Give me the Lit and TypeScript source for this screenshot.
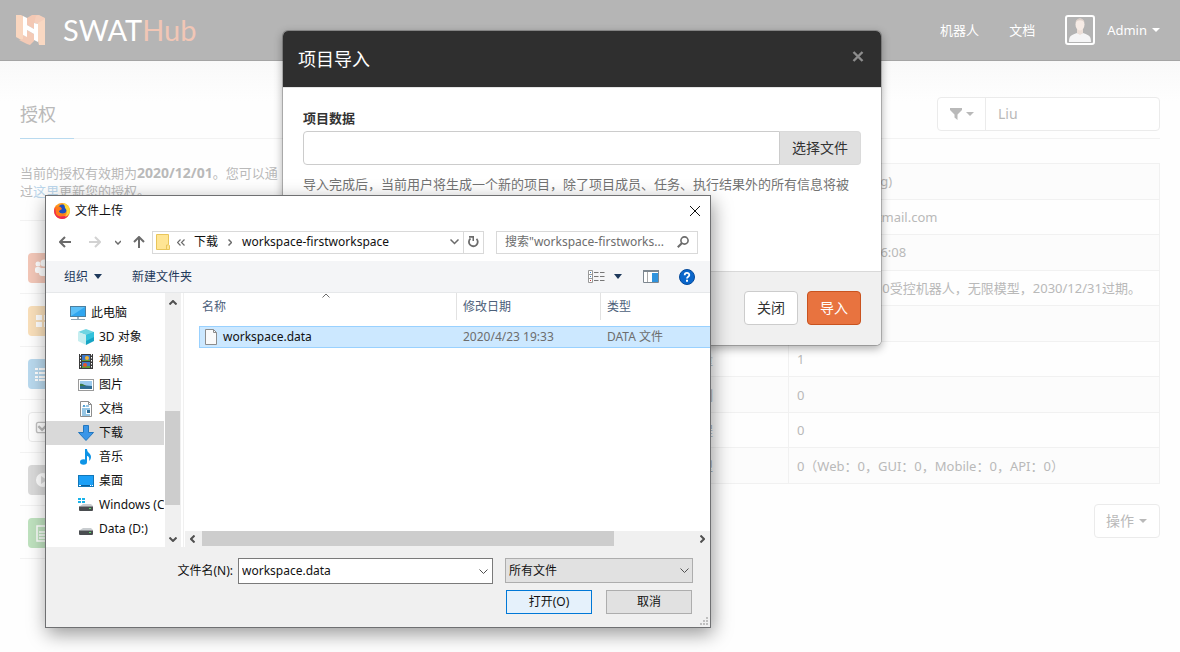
import { LitElement, html, css, svg } from "lit";
import { customElement, state } from "lit/decorators.js";
import { classMap } from "lit/directives/class-map.js";

const base = css`
  *, *::before, *::after { box-sizing: border-box; }
  button, input, select { font: inherit; color: inherit; margin: 0; padding: 0; border-radius: 0; outline: none; }
  button { cursor: pointer; background: none; border: 0; }
  h1, h2, p, ul { margin: 0; padding: 0; font-weight: 400; list-style: none; }
  a { text-decoration: none; color: inherit; }
  svg { display: block; flex: none; }
`;

const caret = html`<svg width="8" height="4" viewBox="0 0 8 4"><path d="M0 0h8L4 4z" fill="currentColor"/></svg>`;

/* ---------- navigation bar ---------- */
@customElement("top-bar")
class TopBar extends LitElement {
  static styles = [base, css`
    :host { display: block; }
    .bar { display: flex; align-items: center; height: 61px; padding: 0 20px 0 16px; background: #b5b5b5; border-bottom: 1px solid #a4a4a4; color: #fff; }
    .brand { display: flex; align-items: center; gap: 18px; font: 29px/36px Lato, sans-serif; }
    .hub { color: #f1c6b5; }
    .links { display: flex; align-items: center; gap: 30px; margin-left: auto; line-height: 20px; }
    .user { display: flex; align-items: center; gap: 5px; }
    .avatar { margin-right: 7px; }
  `];
  render() {
    return html`<header class="bar">
      <a class="brand" href="#">
        <svg width="29" height="30" viewBox="0 0 29 30">
          <path d="M0 0h5l2 1v25l-7-4z" fill="#f9d6bf"/>
          <path d="M7 20l4 1v-6l7 4v7l-4 4-3-1-8-4 4-1z" fill="#f3cab6"/>
          <path d="M11 3l5-3h7l-5 8v6l-7-4z" fill="#f3c8b4"/>
          <path d="M23 0l6 3v3l-7 3-4-1 2-7z" fill="#f5cfbc"/>
          <path d="M22 8l7-4v26h-6l-1-4z" fill="#f9d8c2"/>
          <path d="M7 1l4 2v7l7 4V8l4 1v18l-4-2v-6l-7-4v7l-4-2z" fill="#fff"/>
        </svg>
        <span>SWAT<span class="hub">Hub</span></span>
      </a>
      <nav class="links">
        <a href="#">机器人</a>
        <a href="#">文档</a>
        <a class="user" href="#">
          <svg class="avatar" width="30" height="30" viewBox="0 0 30 30">
            <rect x="1" y="1" width="28" height="28" rx="2" fill="#b3b3b3" stroke="#fff" stroke-width="2"/>
            <path d="M4 27c0-6 2-7 8-9l3 1 3-1c6 2 8 3 8 9z" fill="#f5f5f6"/>
            <path d="M12 13h6v5l-3 2-3-2z" fill="#ecdfd8"/>
            <ellipse cx="15" cy="9.500" rx="4.500" ry="6" fill="#f6ebe5"/>
            <path d="M10.500 8c0-6 9-6 9 0l-1-2c-2-1-5-1-7 0z" fill="#dccfc8"/>
          </svg>
          <span>Admin</span>${caret}
        </a>
      </nav>
    </header>`;
  }
}

/* ---------- licence page ---------- */
const apps = [
  { tone: "red", icon: svg`<g fill="#fff"><circle cx="10" cy="11" r="2.500"/><circle cx="16" cy="10" r="3.500"/><circle cx="22" cy="11" r="2.500"/><rect x="7" y="14" width="6" height="6" rx="2"/><rect x="19" y="14" width="6" height="6" rx="2"/><rect x="11" y="15" width="10" height="8" rx="3"/></g>` },
  { tone: "orange", icon: svg`<path d="M8 9h6v5H8zM16 9h6v5h-6zM8 16h6v5H8zM16 16h6v5h-6z" fill="#fff"/>` },
  { tone: "blue", icon: svg`<path d="M7 9h3v2H7zM7 13h3v2H7zM7 17h3v2H7zM11 9h12v2H11zM11 13h12v2H11zM11 17h12v2H11zM7 20h3v2H7zM11 20h12v2H11z" fill="#fff"/>` },
  { tone: "plain", icon: svg`<rect x="8" y="10" width="12" height="11" rx="2" fill="none" stroke="#c0c0c0" stroke-width="1.500"/><path d="M10 14l4 4 7-7" fill="none" stroke="#bbb" stroke-width="2.500"/>` },
  { tone: "grey", icon: svg`<circle cx="15" cy="15" r="7" fill="#fff"/><path d="M13 11l6 4-6 4z" fill="#dadada"/>` },
  { tone: "green", icon: svg`<path d="M9 8h8l4 4v11H9zM11 14h8M11 17h8M11 20h8" fill="none" stroke="#fff" stroke-width="1.500"/>` },
];

const rows: [string, string][] = [
  ["", "Liu (Shanglong)"],
  ["", "liuxuean@hotmail.com"],
  ["", "2020/04/23, 16:08"],
  ["", "两个机器人，10受控机器人，无限模型，2030/12/31过期。"],
  ["", ""],
  ["数量", "1"],
  ["案例", "0"],
  ["流程", "0"],
  ["模型", "0（Web：0，GUI：0，Mobile：0，API：0）"],
];

@customElement("license-page")
class LicensePage extends LitElement {
  static styles = [base, css`
    :host { display: block; }
    .page { padding: 36px 20px 0; color: #b9b9b9; background: linear-gradient(#f9f9f9, #fefefe 40px); }
    .head { display: flex; justify-content: space-between; align-items: flex-end; border-bottom: 1px solid #f2f2f2; }
    .title { font-size: 18px; line-height: 24px; padding: 0 18px 12px 0; border-bottom: 1px solid #b9daef; margin-bottom: -1px; }
    .filter { display: flex; width: 223px; height: 34px; margin-bottom: 7px; border: 1px solid #ebebeb; border-radius: 4px; background: #fff; }
    .pick { display: flex; align-items: center; justify-content: center; gap: 4px; width: 48px; border-right: 1px solid #ebebeb; }
    .query { flex: 1; min-width: 0; border: 0; background: none; padding: 0 12px; font-size: 14px; }
    .cols { display: flex; gap: 20px; align-items: flex-start; padding-top: 24px; }
    .side { width: 264px; flex: none; }
    .note { line-height: 18px; padding: 1px 0 20px; }
    .note b { font-size: 14px; line-height: 16px; }
    .link { color: #bcd7ec; }
    .apps { border-top: 1px solid #f2f2f2; padding-top: 20px; }
    .app { height: 53px; padding: 12px 8px 0; border-bottom: 1px solid #f2f2f2; }
    .tile { width: 30px; height: 30px; border-radius: 4px; }
    .red { background: #f3c7b8; } .orange { background: #f9dfba; } .blue { background: #b9d9ee; }
    .plain { background: #fff; border: 1px solid #ebebeb; } .grey { background: #dadada; } .green { background: #bfe2bf; }
    .info { flex: 1; min-width: 0; display: flex; flex-direction: column; align-items: flex-end; gap: 20px; }
    .data { width: 100%; height: 321px; border-collapse: collapse; table-layout: fixed; line-height: 18px; }
    .data tr { height: 35px; }
    .data th, .data td { border: 1px solid #f1f1f1; padding: 0 8px; text-align: left; font-weight: 400; white-space: nowrap; }
    .data th { width: 56.6%; padding-right: 75px; text-align: right; color: #a9b4bd; }
    .data tr:nth-child(odd) { background: #fcfcfc; }
    .action { display: flex; align-items: center; gap: 5px; height: 34px; padding: 0 12px 0 11px; border: 1px solid #ebebeb; border-radius: 4px; background: #fff; font-size: 14px; }
  `];
  render() {
    return html`<main class="page">
      <div class="head">
        <h1 class="title">授权</h1>
        <div class="filter">
          <button class="pick" aria-label="筛选">
            <svg width="12" height="12" viewBox="0 0 12 12"><path d="M0 0h12v2L7.500 6.500V12L4.500 9.500v-3L0 2z" fill="currentColor"/></svg>${caret}
          </button>
          <input class="query" aria-label="搜索" .value=${"Liu"}>
        </div>
      </div>
      <div class="cols">
        <aside class="side">
          <p class="note">当前的授权有效期为<b>2020/12/01</b>。您可以通过<a class="link" href="#">这里</a>更新您的授权。</p>
          <ul class="apps">${apps.map(a => html`<li class="app"><svg class="tile ${a.tone}" viewBox="0 0 30 30">${a.icon}</svg></li>`)}</ul>
        </aside>
        <section class="info">
          <table class="data"><tbody>${rows.map(([k, v]) => html`<tr><th scope="row">${k}</th><td>${v}</td></tr>`)}</tbody></table>
          <button class="action">操作${caret}</button>
        </section>
      </div>
    </main>`;
  }
}

/* ---------- import modal ---------- */
@customElement("import-modal")
class ImportModal extends LitElement {
  static styles = [base, css`
    :host { display: block; }
    .modal { border: 1px solid rgba(0, 0, 0, .2); border-radius: 6px; background: #fff; background-clip: padding-box; box-shadow: 0 3px 8px rgba(0, 0, 0, .3); color: #333; overflow: hidden; }
    .top { display: flex; justify-content: space-between; align-items: center; height: 57px; padding: 0 16px 0 15px; background: #2f2f2f; border-bottom: 1px solid #e5e5e5; color: #fff; }
    .name { font-size: 18px; line-height: 24px; }
    .x { padding: 3px 1px 9px; color: #8d8d8d; }
    .body { display: flex; flex-direction: column; padding: 20px; height: 183px; }
    .label { font-weight: 700; line-height: 20px; margin-bottom: 3px; }
    .row { display: flex; height: 34px; }
    .path { flex: 1; min-width: 0; border: 1px solid #ccc; border-radius: 4px 0 0 4px; padding: 0 10px; background: #fff; }
    .choose { width: 81px; border: 1px solid #dadada; border-left: 0; border-radius: 0 4px 4px 0; background: #e0e0e0; font-size: 14px; }
    .help { margin-top: 10px; line-height: 18px; color: #737373; }
    .foot { display: flex; justify-content: flex-end; gap: 9px; padding: 19px 20px 20px; border-top: 1px solid #d9d9d9; background: #f0f0f0; }
    .btn { width: 54px; height: 34px; border: 1px solid #ccc; border-radius: 4px; background: #fff; font-size: 14px; }
    .primary { background: #e8733f; border-color: #c9531f; color: #fff; }
  `];
  render() {
    return html`<section class="modal" role="dialog" aria-labelledby="name">
      <div class="top"><h2 class="name" id="name">项目导入</h2>
        <button class="x" aria-label="关闭"><svg width="12" height="11" viewBox="0 0 12 11"><path d="M1.500 1l9 9M10.500 1l-9 9" stroke="currentColor" stroke-width="2.400"/></svg></button>
      </div>
      <div class="body">
        <label class="label" for="path">项目数据</label>
        <div class="row"><input class="path" id="path" readonly><button class="choose">选择文件</button></div>
        <p class="help">导入完成后，当前用户将生成一个新的项目，除了项目成员、任务、执行结果外的所有信息将被</p>
      </div>
      <div class="foot"><button class="btn">关闭</button><button class="btn primary">导入</button></div>
    </section>`;
  }
}

/* ---------- file chooser window ---------- */
const chev = (w: number, h: number, d: string, sw = 2) => html`<svg width=${w} height=${h} viewBox="0 0 ${w} ${h}"><path d=${d} fill="none" stroke="currentColor" stroke-width=${sw}/></svg>`;

const drive = svg`<path d="M2 9l3-2h8l2 2z" fill="#c9cdd0"/><rect x="1" y="9" width="14" height="5" rx="1" fill="#4a4d50"/><path d="M1 9.500h14" stroke="#8f9396"/><rect x="11" y="11" width="2" height="1" fill="#5be06a"/>`;

const places = [
  { text: "此电脑", root: true, icon: svg`<rect x=".5" y="1.500" width="15" height="10" fill="#5cc0f8" stroke="#4c7f9f"/><path d="M1 11L15 2v9z" fill="#2fa6f0"/><path d="M7 12h2v2H7z" fill="#9fb4c2"/><path d="M1 14.500h14" stroke="#8ca3b3"/>` },
  { text: "3D 对象", icon: svg`<path d="M8 0l8 3-8 3-8-3z" fill="#6fd5e2"/><path d="M0 3l8 3v10l-8-4z" fill="#c6eef0"/><path d="M16 3L8 6v10l8-4z" fill="#16a4c4"/><path d="M8 6l8-3v5l-8 4z" fill="#33c2dc"/>` },
  { text: "视频", icon: svg`<rect x="1" y="1" width="14" height="15" fill="#3b3b3b"/><path d="M2.500 1v15M13.500 1v15" stroke="#fff" stroke-dasharray="1.500 1.500"/><rect x="4" y="2" width="8" height="6" fill="#3d78c9"/><rect x="4" y="9" width="8" height="6" fill="#3d78c9"/><circle cx="9" cy="5" r="2" fill="#f2b632"/><path d="M4 7h8v1H4zM4 13h8v2H4z" fill="#5d9a3b"/><circle cx="7" cy="12" r="2" fill="#e0562c"/>` },
  { text: "图片", icon: svg`<rect x=".5" y="2.500" width="15" height="11" fill="#fff" stroke="#9a9a9a"/><rect x="2" y="4" width="12" height="8" fill="#9dcbee"/><path d="M2 8c3-1 6 1 12 1v3H2z" fill="#2f6c93"/><path d="M2 7c2-1 4 1 6 2H2z" fill="#3b7a45"/>` },
  { text: "文档", icon: svg`<path d="M2.500.5h8l3 3v12h-11z" fill="#fff" stroke="#8d8d8d"/><path d="M10.500.5v3h3" fill="none" stroke="#8d8d8d"/><path d="M5 6l1-2 1 2M8 5h3M4 8h8M4 10h4M4 12h4M4 14h8" fill="none" stroke="#2d8cc9"/><rect x="9" y="9" width="3" height="3" fill="#2d6b94"/>` },
  { text: "下载", icon: svg`<path d="M5.500.5h5v7h5L8 15.500.5 7.500h5z" fill="#3a96e8" stroke="#2377bf"/>` },
  { text: "音乐", icon: svg`<ellipse cx="5.500" cy="13" rx="3.500" ry="2.700" fill="#0e94e6"/><path d="M7 0h2c0 4 4 4 4 8 0 2-1 3-2 4 1-4-1-5-2-5v6H7z" fill="#0e94e6"/>` },
  { text: "桌面", icon: svg`<rect x=".5" y="2.500" width="15" height="11" fill="#1ba0f7" stroke="#1277b8"/><path d="M1 12.500h2M12 12.500h1M14 12.500h1" stroke="#fff"/><path d="M3 12.500h9" stroke="#0c5f9b"/>` },
  { text: "Windows (C:)", icon: svg`${drive}<path d="M0 1h3v2H0zM4 1h3v2H4zM0 4h3v2H0zM4 4h3v2H4z" fill="#18b3ea"/>` },
  { text: "Data (D:)", icon: drive },
];

@customElement("file-dialog")
class FileDialog extends LitElement {
  @state() selected = 5;
  static styles = [base, css`
    :host { display: block; }
    .win { display: flex; flex-direction: column; border: 1px solid #6f7072; background: #fff; color: #111; font-size: 12px; line-height: 16px; box-shadow: 2px 6px 18px rgba(0, 0, 0, .4); }
    .caption { display: flex; align-items: center; gap: 5px; height: 30px; padding: 0 9px 0 8px; }
    .name { font-size: 12px; flex: 1; }
    .nav { display: flex; align-items: center; height: 35px; padding: 0 12px 3px 13px; color: #6b6b6b; }
    .nav button { display: grid; place-items: center; }
    .back { margin-right: 18px; } .fwd { margin-right: 14px; color: #d2d2d2; } .hist { margin-right: 12px; } .up { margin-right: 7px; }
    .crumbs { display: flex; flex: 1; align-items: center; height: 23px; border: 1px solid #d9d9d9; padding-left: 3px; color: #111; }
    .crumbs svg { color: #6b6b6b; }
    .laquo { margin: 0 9px 0 7px; } .sep { margin: 0 10px; }
    .drop { margin-left: auto; width: 18px; }
    .reload { width: 20px; height: 21px; border-left: 1px solid #d9d9d9; }
    .search { display: flex; align-items: center; width: 202px; height: 23px; margin-left: 12px; padding: 0 8px; border: 1px solid #d9d9d9; }
    .search input { flex: 1; min-width: 0; border: 0; background: none; color: #6d6d6d; padding: 0; }
    .search input::placeholder { color: #6d6d6d; opacity: 1; }
    .tools { display: flex; align-items: center; height: 32px; padding: 0 15px 0 18px; background: #f4f5f7; border-bottom: 1px solid #e6e8ea; color: #1e395b; }
    .org { display: flex; align-items: center; gap: 6px; margin-right: 30px; }
    .view { display: flex; align-items: center; gap: 9px; margin-left: auto; margin-right: 21px; }
    .pane { margin-right: 20px; }
    .main { display: flex; height: 254px; }
    .tree { width: 118px; flex: none; padding-top: 8px; overflow: hidden; }
    .place { display: flex; width: 100%; align-items: center; gap: 5px; height: 24px; padding-left: 32px; white-space: nowrap; }
    .root { padding-left: 24px; }
    .on { background: #d9d9d9; }
    .vbar { display: flex; flex-direction: column; align-items: center; width: 16px; background: #f0f0f0; color: #505050; padding: 7px 1px 5px 0; margin: 0 2px 0 1px; }
    .vthumb { align-self: stretch; height: 94px; margin: 106px 0 auto; background: #cdcdcd; }
    .list { display: flex; flex-direction: column; flex: 1; min-width: 0; border-left: 1px solid #f0f0f0; padding-left: 1px; }
    .files { width: 100%; border-collapse: separate; border-spacing: 0; table-layout: fixed; }
    .files th { height: 27px; padding: 0 6px; border-left: 1px solid #e2e2e2; text-align: left; font-weight: 400; color: #4c607a; }
    .files .c1 { width: 271px; border-left: 0; padding: 0 0 0 17px; }
    .c2 { width: 144px; }
    .head { display: grid; align-items: center; grid-template-columns: 120px 1fr; height: 27px; }
    .sort { align-self: start; color: #6d6d6d; }
    .gap td { height: 6px; padding: 0; }
    .file td { height: 22px; padding: 0 7px; border: solid #99d1ff; border-width: 1px 0; background: #cce8ff; color: #6d6d6d; }
    .file .cell { padding: 0 0 0 14px; background: #cce8ff; background-clip: content-box; border: 0; color: #111; }
    .item { display: flex; align-items: center; gap: 6px; height: 22px; padding-left: 5px; border: 1px solid #99d1ff; border-right: 0; }
    .hbar { display: flex; align-items: center; height: 16px; margin-top: auto; padding: 0 5px 1px; background: #f0f0f0; color: #505050; }
    .hthumb { width: 412px; height: 15px; margin: 0 auto 0 7px; background: #cdcdcd; }
    .foot { background: #f0f0f0; padding: 11px 17px 13px 0; display: flex; flex-direction: column; gap: 6px; }
    .line { display: flex; align-items: flex-start; justify-content: flex-end; }
    .line label { line-height: 26px; margin-right: 5px; }
    .combo { display: flex; width: 255px; height: 26px; background: #fff; border: 1px solid #7a7a7a; margin-right: 12px; }
    .combo input { flex: 1; min-width: 0; border: 0; padding: 0 3px; background: none; }
    .combo button { width: 17px; display: grid; place-items: center; color: #505050; }
    .type { display: grid; align-items: center; width: 188px; }
    .type > * { grid-area: 1 / 1; }
    .type select { appearance: none; height: 25px; width: 100%; padding: 0 3px; border: 1px solid #adadad; background: #e1e1e1; }
    .type svg { justify-self: end; margin-right: 4px; pointer-events: none; color: #505050; }
    .acts { gap: 14px; padding-right: 1px; }
    .btn { width: 86px; height: 24px; border: 1px solid #adadad; background: #e1e1e1; }
    .ok { border-color: #0078d7; background: #e5f1fb; }
    .grip { position: absolute; right: 3px; bottom: 3px; }
  `];
  render() {
    const down = "M0.500 0.500L4.500 4.500L8.500 0.500";
    return html`<section class="win" role="dialog" aria-labelledby="name">
      <div class="caption">
        <svg width="16" height="16" viewBox="0 0 16 16"><circle cx="8" cy="8" r="8" fill="#ff9a1f"/><path d="M1 4c-3 7 2 12 7 12 3 0 6-2 7-5-3 3-8 3-10 0C3 9 3 6 1 4z" fill="#ee2755"/><circle cx="8.500" cy="6" r="4.500" fill="#1d4fc0"/><path d="M8.500 0c4 0 7.500 4 7.500 8-1 3-2 5-5 6 3-4 2-7 0-9 0-2-1-4-2.500-5z" fill="#ffd83a"/><path d="M1 4c1-1 2-1 3 0 2-1 3 0 4 2L5 8c0 3 4 4 7 2-1 4-7 5-10 1z" fill="#ff7a1a"/></svg>
        <h2 class="name" id="name">文件上传</h2>
        <button aria-label="关闭">${chev(12, 12, "M1 1l10 10M11 1L1 11", 1)}</button>
      </div>
      <div class="nav">
        <button class="back" aria-label="后退">${chev(12, 12, "M12 6H1.500M6 1L1 6l5 5")}</button>
        <button class="fwd" aria-label="前进">${chev(12, 12, "M0 6h10.500M6 1l5 5-5 5")}</button>
        <button class="hist" aria-label="最近">${chev(6, 5, "M0 1l3 3 3-3", 1.5)}</button>
        <button class="up" aria-label="上移">${chev(12, 12, "M6 12V1.500M1 6l5-5 5 5")}</button>
        <div class="crumbs">
          <svg width="14" height="16" viewBox="0 0 14 16"><path d="M.5.500h12v10l1 1v4H.5z" fill="#ffe594" stroke="#e9c55a"/><path d="M10.500 15v-4h2" fill="none" stroke="#e9c55a"/></svg>
          <span class="laquo">${chev(8, 7, "M3.500 0.500l-3 3 3 3M7.500 0.500l-3 3 3 3", 1.2)}</span>
          <span>下载</span><span class="sep">${chev(4, 7, "M0.500 0.500l3 3-3 3", 1.5)}</span><span>workspace-firstworkspace</span>
          <button class="drop" aria-label="展开">${chev(9, 6, down, 1.5)}</button>
          <button class="reload" aria-label="刷新"><svg width="11" height="12" viewBox="0 0 11 12"><path d="M2.500 2.500A4.400 4.400 0 1 0 8.500 2.800" fill="none" stroke="#6b6b6b" stroke-width="1.800"/><path d="M1 0h5v5H4.500V1.800H1z" fill="#6b6b6b"/></svg></button>
        </div>
        <div class="search"><input aria-label="搜索" placeholder='搜索"workspace-firstworks...'>
          <svg width="12" height="12" viewBox="0 0 12 12"><circle cx="7.500" cy="4.500" r="3.600" fill="none" stroke="#6b6b6b" stroke-width="1.600"/><path d="M5 7L.8 11.200" stroke="#6b6b6b" stroke-width="2"/></svg>
        </div>
      </div>
      <div class="tools">
        <button class="org">组织<svg width="8" height="5" viewBox="0 0 8 5"><path d="M0 0h8L4 5z" fill="currentColor"/></svg></button>
        <button>新建文件夹</button>
        <button class="view" aria-label="视图">
          <svg width="17" height="13" viewBox="0 0 17 13"><path d="M.5.500h4v12h-4zM.5 4.500h4M.5 8.500h4" fill="#fff" stroke="#999"/><path d="M6 2.500h11M6 6.500h11M6 10.500h11" stroke="#777" stroke-dasharray="4.500 1.500"/><path d="M2 2h1v1H2z" fill="#3b82c4"/><path d="M2 6h1v1H2z" fill="#3b82c4"/><path d="M2 10h1v1H2z" fill="#c43b3b"/></svg>
          <svg width="8" height="5" viewBox="0 0 8 5"><path d="M0 0h8L4 5z" fill="currentColor"/></svg>
        </button>
        <button class="pane" aria-label="预览窗格"><svg width="16" height="13" viewBox="0 0 16 13"><path d="M.5.500h15v12H.5z" fill="#fff" stroke="#7d8790"/><path d="M0 1h16" stroke="#7d8790" stroke-width="2"/><path d="M4.500 2v10" stroke="#aaa"/><path d="M9 3h6v9H9z" fill="#2f93dd"/></svg></button>
        <button aria-label="帮助"><svg width="16" height="16" viewBox="0 0 16 16"><circle cx="8" cy="8" r="7.500" fill="#0a66cb" stroke="#064a9a"/><path d="M5.700 6.200C5.700 3.200 10.300 3.200 10.300 6c0 1.800-2.300 1.800-2.300 3.600" fill="none" stroke="#fff" stroke-width="1.800"/><path d="M7 10.800h2v2H7z" fill="#fff"/></svg></button>
      </div>
      <div class="main">
        <nav class="tree">${places.map((p, i) => html`<button class=${classMap({ place: true, root: !!p.root, on: i === this.selected })} @click=${() => (this.selected = i)}><svg width="16" height="16" viewBox="0 0 16 16">${p.icon}</svg>${p.text}</button>`)}</nav>
        <div class="vbar">${chev(8, 5, "M0.500 4.500L4 1l3.500 3.500")}<div class="vthumb"></div>${chev(8, 5, "M0.500 0.500L4 4l3.500-3.500")}</div>
        <div class="list">
          <table class="files">
            <thead><tr>
              <th class="c1"><div class="head">名称<span class="sort">${chev(8, 5, "M0.500 4.500L4 1l3.500 3.500", 1)}</span></div></th>
              <th class="c2">修改日期</th><th>类型</th>
            </tr></thead>
            <tbody>
              <tr class="gap"><td colspan="3"></td></tr>
              <tr class="file">
                <td class="cell"><div class="item"><svg width="12" height="16" viewBox="0 0 12 16"><path d="M.5.500h8l3 3v12H.5z" fill="#fafafa" stroke="#8c8c8c"/><path d="M8.500.5v3h3" fill="none" stroke="#8c8c8c"/></svg>workspace.data</div></td>
                <td>2020/4/23 19:33</td><td>DATA 文件</td>
              </tr>
            </tbody>
          </table>
          <div class="hbar">${chev(5, 8, "M4.500 0.500L1 4l3.500 3.500")}<div class="hthumb"></div>${chev(5, 8, "M0.500 0.500L4 4L0.500 7.500")}</div>
        </div>
      </div>
      <div class="foot">
        <div class="line">
          <label for="file">文件名(N):</label>
          <div class="combo"><input id="file" .value=${"workspace.data"}><button aria-label="展开">${chev(9, 5, down, 1)}</button></div>
          <div class="type"><select aria-label="文件类型"><option>所有文件</option></select>${chev(9, 5, down, 1)}</div>
        </div>
        <div class="line acts"><button class="btn ok">打开(O)</button><button class="btn">取消</button></div>
      </div>
      <svg class="grip" width="8" height="8" viewBox="0 0 8 8"><path d="M6 0h2v2H6zM3 3h2v2H3zM6 3h2v2H6zM0 6h2v2H0zM3 6h2v2H3zM6 6h2v2H6z" fill="#bfbfbf"/></svg>
    </section>`;
  }
}

@customElement("app-root")
class AppRoot extends LitElement {
  static styles = [base, css`
    :host { display: block; position: relative; min-height: 100vh; overflow: hidden; background: #fefefe; font: 13px/18px "Noto Sans", "Noto Sans CJK SC", sans-serif; }
    .modal { position: absolute; top: 30px; left: calc(50% - 308px); width: 600px; }
    .dialog { position: absolute; top: 195px; left: 45px; width: 666px; }
  `];
  render() {
    return html`<top-bar></top-bar><license-page></license-page>
      <import-modal class="modal"></import-modal>
      <file-dialog class="dialog"></file-dialog>`;
  }
}
